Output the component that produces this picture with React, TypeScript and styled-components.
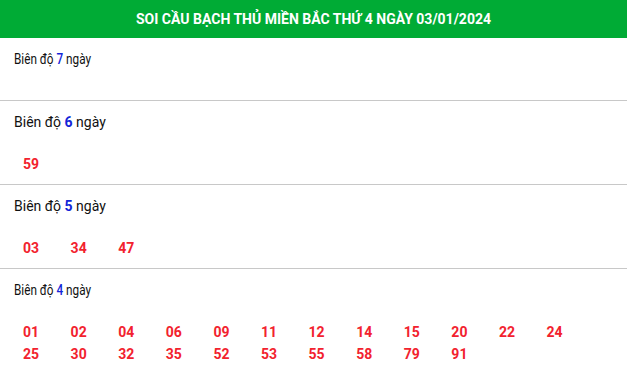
import styled, { createGlobalStyle } from "styled-components";

const GlobalStyle = createGlobalStyle`
  * {
    box-sizing: border-box;
  }
  body {
    margin: 0;
    background: #fff;
    font-family: Roboto, "Liberation Sans", Arial, sans-serif;
  }
`;

const Wrapper = styled.div`
  width: 627px;
`;

const Header = styled.h2`
  margin: 0;
  height: 38px;
  background-color: #00ab35;
  color: #fff;
  font-size: 14px;
  font-weight: 700;
  display: flex;
  align-items: center;
  justify-content: center;
`;

const Section = styled.div`
  border-bottom: 1px solid #c8c8c8;
  padding: 12px 0 0 14px;
  min-height: 63px;
`;

const Label = styled.div<{ $narrow?: boolean }>`
  font-size: 14px;
  line-height: 18px;
  color: #111;
  transform-origin: left center;
  transform: ${(props) => (props.$narrow ? "scaleX(0.84)" : "none")};
  b {
    color: #1225d8;
    font-weight: ${(props) => (props.$narrow ? 500 : 700)};
  }
`;

const NumberGrid = styled.div`
  display: grid;
  grid-template-columns: repeat(12, 47.6px);
  padding: 22px 0 9px 9px;
`;

const Num = styled.span`
  font-size: 14px;
  font-weight: 700;
  line-height: 22px;
  color: #f2222e;
`;

interface IRange {
  days: number;
  numbers: string[];
}

const ranges: IRange[] = [
  { days: 7, numbers: [] },
  { days: 6, numbers: ["59"] },
  { days: 5, numbers: ["03", "34", "47"] },
  {
    days: 4,
    numbers: [
      "01", "02", "04", "06", "09", "11", "12", "14", "15", "20", "22", "24",
      "25", "30", "32", "35", "52", "53", "55", "58", "79", "91",
    ],
  },
];

function App() {
  return (
    <Wrapper>
      <GlobalStyle />
      <Header>SOI CẦU BẠCH THỦ MIỀN BẮC THỨ 4 NGÀY 03/01/2024</Header>
      {ranges.map((range) => (
        <Section key={range.days}>
          <Label $narrow={range.days === 7 || range.days === 4}>
            Biên độ <b>{range.days}</b> ngày
          </Label>
          {range.numbers.length > 0 && (
            <NumberGrid>
              {range.numbers.map((n) => (
                <Num key={n}>{n}</Num>
              ))}
            </NumberGrid>
          )}
        </Section>
      ))}
    </Wrapper>
  );
}

export default App;
